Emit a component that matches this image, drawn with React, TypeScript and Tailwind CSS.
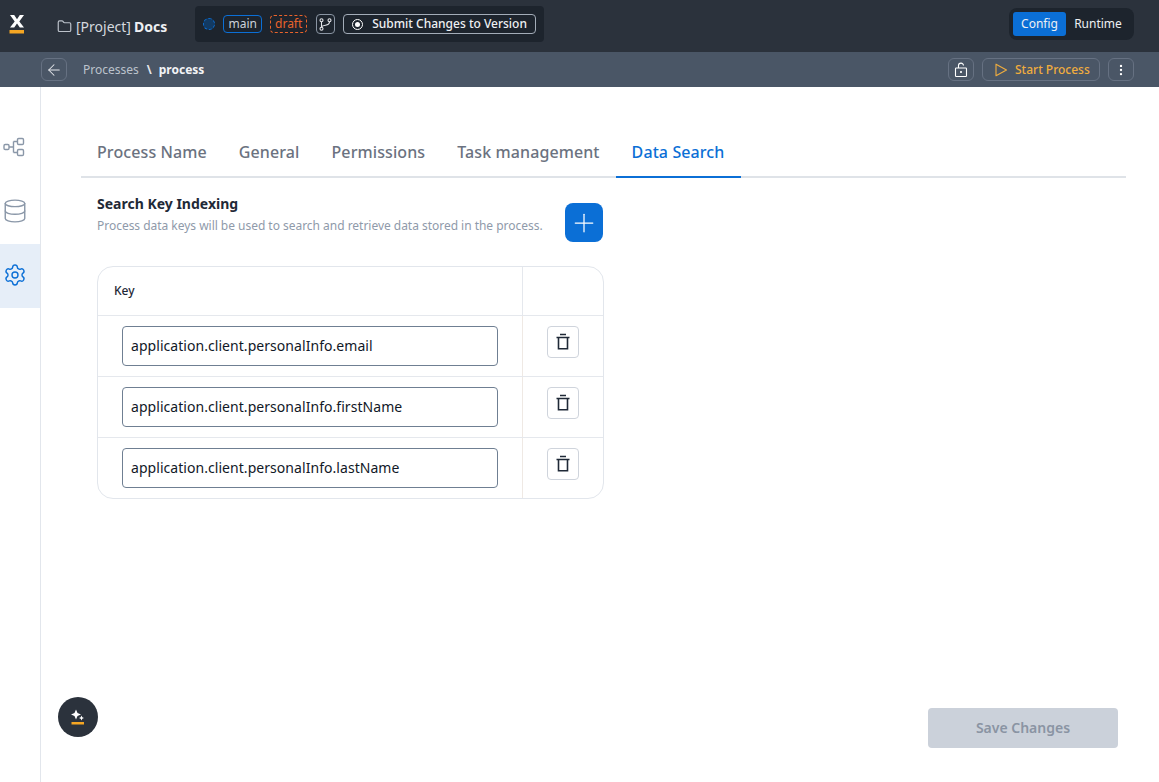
import { ArrowLeft, Database, Ellipsis, Folder, Plus, Settings } from "lucide-react";

const tabs = ["Process Name", "General", "Permissions", "Task management", "Data Search"];
const keys = [
  "application.client.personalInfo.email",
  "application.client.personalInfo.firstName",
  "application.client.personalInfo.lastName",
];

const Logo = () => (
  <svg width="16" height="24" viewBox="0 0 16 24" className="block">
    <path d="M1 1h4.200L8 5.200 10.800 1H15l-4.700 6.400L15 13.600h-4.200L8 9.600l-2.800 4H1l4.700-6.200z" fill="#fff" />
    <rect x="0.500" y="16" width="14.500" height="3.500" fill="#f5a623" />
  </svg>
);

const FlowIcon = () => (
  <svg width="22" height="20" viewBox="0 0 22 20" fill="none" stroke="#8a97a8" strokeWidth="1.4">
    <rect x="1" y="7.500" width="5" height="5" rx="1.200" />
    <rect x="14.500" y="1.500" width="6" height="6" rx="1.200" />
    <rect x="14.500" y="12.500" width="6" height="6" rx="1.200" />
    <path d="M6 10h4.500M10.500 4.500v11M10.500 4.500h4M10.500 15.500h4" />
  </svg>
);

const BranchIcon = () => (
  <svg width="13" height="13" viewBox="0 0 13 13" fill="none" stroke="#e5e7eb" strokeWidth="1.100">
    <circle cx="2.500" cy="2.300" r="1.500" />
    <circle cx="10.500" cy="2.300" r="1.500" />
    <circle cx="2.500" cy="10.700" r="1.500" />
    <path d="M2.500 3.800v5.400M10.500 3.800c0 2.700-2 3.200-4 3.400-2 .2-3.400.6-4 1.600" />
  </svg>
);

const LockOpen = () => (
  <svg width="16" height="16" viewBox="0 0 16 16" fill="none" stroke="#fff" strokeWidth="1.100">
    <rect x="2.500" y="6" width="11" height="8.500" rx="0.800" />
    <path d="M5.500 6V3.600a2.500 2.500 0 0 1 5 0" />
    <circle cx="8" cy="10" r="0.500" fill="#fff" />
  </svg>
);

const PlayOutline = () => (
  <svg width="14" height="16" viewBox="0 0 14 16" fill="none" stroke="#f0ad3e" strokeWidth="1.100" strokeLinejoin="round">
    <path d="M2 2.200v11.600L12.500 8z" />
  </svg>
);

const Trash = () => (
  <svg width="16" height="18" viewBox="0 0 16 18" fill="none" stroke="#1f2937" strokeWidth="1.600">
    <path d="M1.500 4.500h13M5 1.500h6" />
    <path d="M3.500 4.500v11.200h9V4.500" />
  </svg>
);

const Sparkle = () => (
  <svg width="16" height="18" viewBox="0 0 16 18">
    <path d="M5.500 1.500 7 5l3.500 1.500L7 8l-1.500 3.500L4 8 .5 6.500 4 5z" fill="#fff" transform="translate(0.500 0)" />
    <path d="M11.500 7.500l.8 1.700 1.700.8-1.700.8-.8 1.700-.8-1.700-1.700-.8 1.700-.8z" fill="#fff" />
    <rect x="1.500" y="14" width="12.500" height="2.500" fill="#f5a623" />
  </svg>
);

export default function App() {
  return (
    <div className="relative flex h-screen flex-col overflow-hidden bg-white font-['Noto_Sans',sans-serif] text-[#1f2937]">
      <header className="flex h-[52px] shrink-0 items-center bg-[#2b323c] pl-[9px] pr-[25px]">
        <Logo />
        <Folder className="ml-[32px] h-[15px] w-[15px] text-[#bcc2ca]" strokeWidth={1.9} />
        <span className="ml-[4px] text-[14px] text-[#d5d9df]">[Project]</span>
        <span className="ml-[3px] text-[14px] font-bold text-[#eef0f3]">Docs</span>

        <div className="ml-[28px] -mt-[4px] flex h-[36px] items-center rounded-[4px] bg-[#1d242d] px-[8px]">
          <span className="h-[12px] w-[12px] rounded-full border border-dashed border-[#0b6fd6] bg-[#123a63]" />
          <span className="ml-[8px] flex h-[18px] w-[39px] items-center justify-center rounded-[4px] border border-[#0b6fd6] text-[12px] text-[#cbd2da]">
            main
          </span>
          <span className="ml-[8px] flex h-[18px] w-[37px] items-center justify-center rounded-[4px] border border-dashed border-[#e9632b] text-[12px] text-[#e9632b]">
            draft
          </span>
          <span className="ml-[9px] flex h-[20px] w-[19px] items-center justify-center rounded-[4px] border border-[#8a95a3]">
            <BranchIcon />
          </span>
          <span className="ml-[8px] flex h-[20px] w-[193px] items-center rounded-[4px] border border-[#a3acb8] pl-[8px] text-[12px] font-medium text-[#eef0f3]">
            <span className="flex h-[11px] w-[11px] items-center justify-center rounded-full border border-white">
              <span className="h-[5px] w-[5px] rounded-full bg-white" />
            </span>
            <span className="ml-[9px]">Submit Changes to Version</span>
          </span>
        </div>

        <div className="ml-auto -mt-[4px] flex h-[32px] items-center rounded-[8px] bg-[#1d242d] px-[4px] text-[12px] text-[#eef0f3]">
          <span className="flex h-[24px] w-[53px] items-center justify-center rounded-[3px] bg-[#0b6fd6]">Config</span>
          <span className="flex h-[24px] w-[64px] items-center justify-center">Runtime</span>
        </div>
      </header>

      <div className="flex h-[35px] shrink-0 items-center bg-[#4a5666] pl-[41px] pr-[25px]">
        <button className="flex h-[23px] w-[26px] items-center justify-center rounded-[6px] border border-[#667182]">
          <ArrowLeft className="h-[18px] w-[18px] text-[#e5e7eb]" strokeWidth={1.4} />
        </button>
        <span className="ml-[16px] text-[12px] text-[#bcc3cc]">Processes</span>
        <span className="ml-[8px] text-[12px] font-bold text-[#e5e7eb]">\</span>
        <span className="ml-[7px] text-[12px] font-bold text-[#f3f4f6]">process</span>

        <button className="ml-auto flex h-[23px] w-[26px] items-center justify-center rounded-[6px] border border-[#667182]">
          <LockOpen />
        </button>
        <button className="ml-[8px] flex h-[23px] w-[118px] items-center rounded-[6px] border border-[#667182] pl-[11px] text-[12px] font-medium text-[#f0ad3e]">
          <PlayOutline />
          <span className="ml-[7px]">Start Process</span>
        </button>
        <button className="ml-[8px] flex h-[23px] w-[26px] items-center justify-center rounded-[6px] border border-[#667182]">
          <Ellipsis className="h-[14px] w-[14px] rotate-90 text-white" strokeWidth={2} />
        </button>
      </div>

      <div className="flex min-h-0 flex-1">
        <aside className="flex w-[41px] shrink-0 flex-col border-r border-[#e2e6ec] pt-[29px]">
          <div className="flex h-[64px] items-center pb-[2px] pl-[3px]">
            <FlowIcon />
          </div>
          <div className="flex h-[64px] items-center pb-[2px] pl-[2px]">
            <Database className="h-[26px] w-[26px] text-[#8a97a8]" strokeWidth={1.3} />
          </div>
          <div className="flex h-[64px] items-center bg-[#e6eef8] pb-[2px] pl-[3px]">
            <Settings className="h-[24px] w-[24px] text-[#0b6fd6]" strokeWidth={1.4} />
          </div>
        </aside>

        <main className="flex min-w-0 flex-1 flex-col pb-[34px] pl-[40px] pr-[33px] pt-[48px]">
          <nav className="flex h-[43px] border-b-2 border-[#dfe3e8]">
            {tabs.map((tab) => (
              <div
                key={tab}
                className={
                  tab === "Data Search"
                    ? "-mb-[2px] flex h-[43px] w-[125px] items-start border-b-2 border-[#0b6fd6] px-[16px] pt-[5px] text-[16px] font-medium tracking-[0.1px] text-[#0b6fd6]"
                    : "flex h-[43px] items-start px-[16px] pt-[5px] text-[16px] font-medium tracking-[0.1px] text-[#6b7280]"
                }
              >
                {tab}
              </div>
            ))}
          </nav>

          <section className="flex w-[522px] items-start justify-between pl-[16px] pt-[16px]">
            <div>
              <h2 className="text-[14px] font-bold leading-[20px] text-[#1f2937]">Search Key Indexing</h2>
              <p className="mt-[2px] text-[12px] leading-[20px] tracking-[-0.025px] text-[#8f9aaa]">
                Process data keys will be used to search and retrieve data stored in the process.
              </p>
            </div>
            <button className="mt-[9px] flex h-[39px] w-[38px] items-center justify-center rounded-[8px] bg-[#0b6fd6]">
              <Plus className="h-[30px] w-[30px] text-white" strokeWidth={1} />
            </button>
          </section>

          <div className="ml-[16px] mt-[24px] w-[507px] overflow-hidden rounded-[16px] border border-[#e2e6ec]">
            <div className="flex h-[49px] border-b border-[#e5e8ed]">
              <div className="flex flex-1 items-center border-r border-[#e5e8ed] pl-[16px] text-[12px] font-medium text-[#1f2937]">
                Key
              </div>
              <div className="w-[80px]" />
            </div>
            {keys.map((k, i) => (
              <div key={k} className={i < keys.length - 1 ? "flex h-[61px] border-b border-[#e5e8ed]" : "flex h-[60px]"}>
                <div className="flex flex-1 items-center border-r border-[#efe9e4] pl-[24px]">
                  <div className="flex h-[40px] w-[376px] items-center rounded-[4px] border border-[#6f7f92] pb-[2px] pl-[8px] text-[14px] tracking-[0.05px] text-[#111827]">
                    {k}
                  </div>
                </div>
                <div className="flex w-[80px] items-start justify-center pt-[10px]">
                  <button className="flex h-[32px] w-[32px] items-center justify-center rounded-[4px] border border-[#cfd4dc]">
                    <Trash />
                  </button>
                </div>
              </div>
            ))}
          </div>

          <div className="mt-auto flex justify-end pr-[8px]">
            <button className="h-[40px] w-[190px] rounded-[4px] bg-[#cbd1da] pb-[2px] text-[14px] font-semibold text-[#8a94a3]">
              Save Changes
            </button>
          </div>
        </main>
      </div>

      <button className="absolute left-[58px] top-[697px] flex h-[40px] w-[40px] items-center justify-center rounded-full bg-[#2b323c]">
        <Sparkle />
      </button>
    </div>
  );
}
